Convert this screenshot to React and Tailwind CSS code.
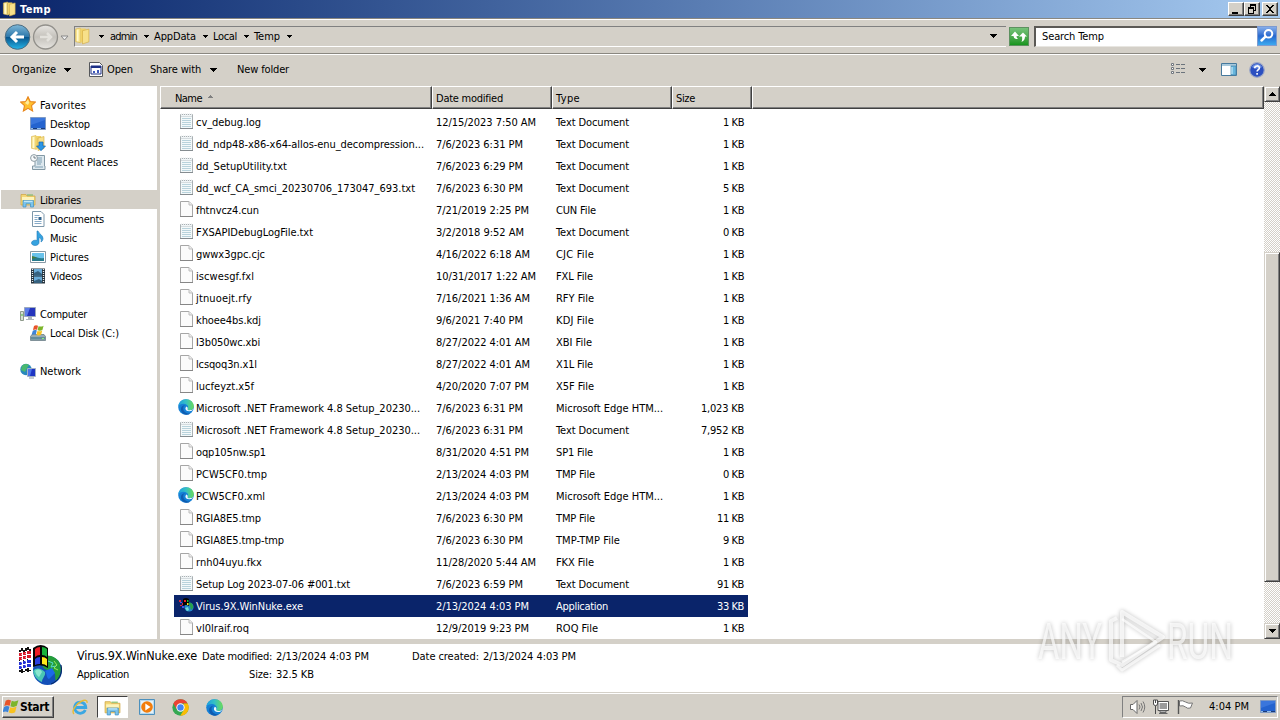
import { useLayoutEffect, useRef, useState } from "react";

const files = [
    ["text", "cv_debug.log", 65, "12/15/2023 7:50 AM", 100, "Text Document", 73, "1 KB"],
    ["text", "dd_ndp48-x86-x64-allos-enu_decompression...", 228, "7/6/2023 6:31 PM", 87, "Text Document", 73, "1 KB"],
    ["text", "dd_SetupUtility.txt", 91, "7/6/2023 6:29 PM", 87, "Text Document", 73, "1 KB"],
    ["text", "dd_wcf_CA_smci_20230706_173047_693.txt", 219, "7/6/2023 6:30 PM", 87, "Text Document", 73, "5 KB"],
    ["blank", "fhtnvcz4.cun", 63, "7/21/2019 2:25 PM", 93, "CUN File", 40, "1 KB"],
    ["text", "FXSAPIDebugLogFile.txt", 117, "3/2/2018 9:52 AM", 88, "Text Document", 73, "0 KB"],
    ["blank", "gwwx3gpc.cjc", 69, "4/16/2022 6:18 AM", 94, "CJC File", 38, "1 KB"],
    ["blank", "iscwesgf.fxl", 58, "10/31/2017 1:22 AM", 100, "FXL File", 37, "1 KB"],
    ["blank", "jtnuoejt.rfy", 56, "7/16/2021 1:36 AM", 94, "RFY File", 38, "1 KB"],
    ["blank", "khoee4bs.kdj", 65, "9/6/2021 7:40 PM", 87, "KDJ File", 38, "1 KB"],
    ["blank", "l3b050wc.xbi", 64, "8/27/2022 4:01 AM", 94, "XBI File", 36, "1 KB"],
    ["blank", "lcsqoq3n.x1l", 61, "8/27/2022 4:01 AM", 94, "X1L File", 37, "1 KB"],
    ["blank", "lucfeyzt.x5f", 58, "4/20/2020 7:07 PM", 93, "X5F File", 38, "1 KB"],
    ["edge", "Microsoft .NET Framework 4.8 Setup_20230...", 224, "7/6/2023 6:31 PM", 87, "Microsoft Edge HTM...", 107, "1,023 KB"],
    ["text", "Microsoft .NET Framework 4.8 Setup_20230...", 224, "7/6/2023 6:31 PM", 87, "Text Document", 73, "7,952 KB"],
    ["blank", "oqp105nw.sp1", 70, "8/31/2020 4:51 PM", 93, "SP1 File", 37, "1 KB"],
    ["blank", "PCW5CF0.tmp", 71, "2/13/2024 4:03 PM", 93, "TMP File", 39, "0 KB"],
    ["edge", "PCW5CF0.xml", 69, "2/13/2024 4:03 PM", 93, "Microsoft Edge HTM...", 107, "1 KB"],
    ["blank", "RGIA8E5.tmp", 65, "7/6/2023 6:30 PM", 87, "TMP File", 39, "11 KB"],
    ["blank", "RGIA8E5.tmp-tmp", 88, "7/6/2023 6:30 PM", 87, "TMP-TMP File", 64, "9 KB"],
    ["blank", "rnh04uyu.fkx", 66, "11/28/2020 5:44 AM", 100, "FKX File", 38, "1 KB"],
    ["text", "Setup Log 2023-07-06 #001.txt", 154, "7/6/2023 6:59 PM", 87, "Text Document", 73, "91 KB"],
    ["exe", "Virus.9X.WinNuke.exe", 107, "2/13/2024 4:03 PM", 93, "Application", 52, "33 KB"],
    ["blank", "vl0lraif.roq", 53, "12/9/2019 9:23 PM", 93, "ROQ File", 42, "1 KB"],
];

const sizeWidths = { "1,023 KB": 43, "7,952 KB": 43, "11 KB": 27, "91 KB": 27, "33 KB": 27 };

const places = [
    { icon: "star", name: "Favorites", w: 46 },
    { icon: "desktop", name: "Desktop", w: 40, child: true },
    { icon: "downloads", name: "Downloads", w: 53, child: true },
    { icon: "recent", name: "Recent Places", w: 68, child: true },
    null,
    { icon: "libraries", name: "Libraries", w: 41, active: true },
    { icon: "documents", name: "Documents", w: 54, child: true },
    { icon: "music", name: "Music", w: 27, child: true },
    { icon: "pictures", name: "Pictures", w: 39, child: true },
    { icon: "videos", name: "Videos", w: 32, child: true },
    null,
    { icon: "computer", name: "Computer", w: 47 },
    { icon: "disk", name: "Local Disk (C:)", w: 69, child: true },
    null,
    { icon: "network", name: "Network", w: 41 },
];

// Spreads the letters so the text takes exactly w pixels
function Text({ w, children, className = "" }) {
    const ref = useRef(null);
    const [spacing, setSpacing] = useState(0);

    useLayoutEffect(() => {
        const el = ref.current;
        el.style.letterSpacing = "0px";
        const natural = el.getBoundingClientRect().width;
        const value = (w - natural) / children.length;
        el.style.letterSpacing = `${value}px`;
        setSpacing(value);
    }, [w, children]);

    return (
        <span
            ref={ref}
            className={`inline-block shrink-0 whitespace-pre ${className}`}
            style={{ letterSpacing: `${spacing}px` }}
        >
            {children}
        </span>
    );
}

function Edge() {
    return (
        <>
            <defs>
                <linearGradient id="wave" x1="0" y1="0" x2="1" y2="0">
                    <stop offset="0" stopColor="#1c9fe0" />
                    <stop offset=".5" stopColor="#34c0c4" />
                    <stop offset="1" stopColor="#6bdc58" />
                </linearGradient>
            </defs>
            <circle cx="8" cy="8" r="7.800" fill="#1580d6" />
            <path d="M.2 7.500C.8 3 4 .2 8 .2c4.600 0 7.800 3.300 7.800 7 0 2.500-1.900 4-4.200 4-1.600 0-2.400-.7-2-1.300.9-1.300.6-3-.6-3.900C6.500 4 2 4.500.2 7.500z" fill="url(#wave)" />
            <path d="M5.200 9c0 3.500 3 6 7.300 5.400C9 17 4.500 15.500 3.200 12 2 8.500 4.500 6.200 7.300 6.300 6 6.700 5.200 7.800 5.200 9z" fill="#0f5cb0" />
            <path d="M8.400 7.400c1.300.6 1.600 1.700 1.200 2.500-.2.700.5 1.300 2 1.300 1.300 0 2.600-.4 3.500-1.200-.5 1.500-2 2.300-3.900 2.200-2.400-.1-3.800-1.300-3.800-2.800 0-.8.400-1.500 1-2z" fill="#eefaff" />
        </>
    );
}

function Folder() {
    return (
        <>
            <path d="M1.500 1.500L6 .5v13.800l-4.500-1z" fill="#f8e48d" stroke="#d9b44c" strokeWidth=".6" />
            <path d="M6 1h5v10l-5 4z" fill="#f1d267" />
            <path d="M8 3l6-1.500v12L8 15.500z" fill="#f7e08a" stroke="#d3ac42" strokeWidth=".6" />
            <path d="M3.500 2v11" stroke="#fff8cf" strokeWidth="1.500" />
        </>
    );
}

function Library() {
    return (
        <>
            <path d="M1 2.500h5l1 1.500h8v9H1z" fill="#f3d777" stroke="#cfa440" strokeWidth=".7" />
            <path d="M2 5h12v3H2z" fill="#fdf3bb" />
            <path d="M7 3h6" stroke="#78b85a" />
            <path d="M3 15V8.500h10.500V15h-3v-3.200H6V15z" fill="#7cc4ec" stroke="#3f8fc4" strokeWidth=".7" />
            <path d="M4 9.300h8.500" stroke="#d3f0fb" />
        </>
    );
}

function WindowsFlag() {
    return (
        <>
            <path d="M2.500 2.500C4.500 1 6 1.500 7.500 2.300L6.300 7.400C4.600 6.500 3 6.600 1.200 7.600z" fill="#e8542a" />
            <path d="M8.200 2.700c2 .9 4.200.7 6.300-.5l-1.500 5.200c-1.900 1.200-4 1.300-6 .4z" fill="#7cb52a" />
            <path d="M1 8.400c1.800-1 3.400-1.100 5-.2l-1.300 5.100c-1.700-.9-3.400-.8-5.200.2z" fill="#3d84d8" />
            <path d="M6.800 8.600c2 .9 4 .7 6-.5L11.400 13.400c-1.900 1.100-3.900 1.200-5.900.3z" fill="#f8c220" />
        </>
    );
}

function Nuke() {
    return (
        <>
            <path d="M1 7h2V5h2v2h2V5h2V4h2v2h2v2h-2V7H9v1H7v1H5V8H3v1H1zM1 27h2v-1h2v2h2v-2h2v-1h2v2h2v1h-2v1H9v-1H7v1H5v1H3v-1H1zM1 17h1v1H1zm4 0h1v1H5zm4-1h1v1H9z" fill="#111" />
            <path d="M1 10h3v3H1zm4-1h3v3H5zm4-1h4v3H9zM1 14h3v3H1zm4-1h3v3H5zm4-1h4v3H9z" fill="#d91b2c" />
            <path d="M1 19h3v3H1zm4-1h3v3H5zm4-1h4v3H9zM1 23h3v3H1zm4-1h3v3H5zm4-1h4v3H9z" fill="#2633d8" />
            <path d="M4 9v18M8 8v18" stroke="#fff" strokeDasharray="1 1" />
            <circle cx="29.500" cy="27.500" r="14.500" fill="#1450b8" />
            <path d="M22 15c6-5 17-2 20 6 2 7 0 13-4 17-2-4 1-6-3-9s-8-1-10-5 1-5-3-9z" fill="#259e3a" />
            <path d="M15 28c3-4 8-3 12 1 1 4-3 6-3 10-5-2-8-6-9-11z" fill="#49c6b4" />
            <path d="M17 28c3-2 5-2 7 1l-3 5c-2-1-3-3-4-6z" fill="#8ae6cf" />
            <path d="M30 18l5 2-2 4 5-1" stroke="#54d8d0" fill="none" />
            <path d="M36 18l3 4-3 3 4 2" stroke="#98e85b" fill="none" />
            <path d="M27 28c2 2 1 7 4 8l6-6-3-5z" fill="#1b6ae8" />
            <path d="M43 22c2 8-2 16-10 19" stroke="#06245c" fill="none" />
            <path d="M15 5q8-6 15 0v20q-7-5-15-1z" fill="#050505" />
            <path d="M17 6q2-2 5-2v8q-3 0-5 2z" fill="#ed1c24" />
            <path d="M24 4q3 0 5 2v8q-2-2-5-2z" fill="#17b33b" />
            <path d="M17 16q2-2 5-2v7q-3 0-5 1z" fill="#2b3fe0" />
            <path d="M24 14q3 0 5 2v7q-2-2-5-2z" fill="#ffe81b" />
        </>
    );
}

function Icon({ name, className = "w-4 h-4" }) {
    const icons = {
        edge: <Edge />,
        folder: <Folder />,
        libraries: <Library />,
        flag: <WindowsFlag />,
        text: (
            <>
                <path d="M2.500 1.500h12v14h-12z" fill="#f4f9fa" stroke="#a9b0b3" />
                <path d="M3 1.500h11" stroke="#e8ecee" strokeWidth="2" strokeDasharray="1 1" />
                <path d="M4 5.500h9M4 7.500h9M4 9.500h9M4 11.500h9M4 13.500h9" stroke="#b9d3dc" />
                <path d="M3 3.500h11" stroke="#d5dcdf" />
                <path d="M2 15.500h13" stroke="#858c90" />
            </>
        ),
        blank: (
            <>
                <path d="M2.500.5h8.500l3.500 3.500v11.500h-12z" fill="#fbfbfb" stroke="#a6a6a6" />
                <path d="M11 .5V4h3.500" fill="#ececec" stroke="#bdbdbd" />
                <path d="M2 15.500h13" stroke="#868686" />
            </>
        ),
        exe: (
            <>
                <path d="M1 3h2v2H1zm3 3h2v2H4zM2 8h2v1H2z" fill="#e02436" />
                <path d="M2 5h2v1H2zm2 4h2v2H4z" fill="#4054ea" />
                <circle cx="11" cy="10" r="4.600" fill="#2389c9" />
                <path d="M9 6c4-2 7 2 6 5l-2 2-1-4z" fill="#28a14b" />
                <path d="M7 11l3-1 1 3-2 1z" fill="#6fdcd2" />
                <path d="M5 2q3-2 6 0v7q-3-2-6 0z" fill="#050505" />
                <path d="M6 3h2v2H6z" fill="#ed1c24" />
                <path d="M9 3h1.500v2H9z" fill="#17b33b" />
                <path d="M9 6h1.500v2H9z" fill="#ffe81b" />
            </>
        ),
        star: (
            <>
                <path d="M8 .8l2.200 4.800 5.200.5-3.900 3.600 1.100 5.300L8 12.300 3.400 15l1.100-5.300L.6 6.100l5.200-.5z" fill="#ffc02e" stroke="#e8871e" strokeWidth="1.100" />
                <path d="M8 3.500l1.200 3.200L8 9 5 7z" fill="#ffeb9a" />
            </>
        ),
        desktop: (
            <>
                <path d="M.5 1.500h15v12H.5z" fill="#2463cf" stroke="#7f9ac4" />
                <path d="M1 2h14v2L1 9z" fill="#3a76dc" />
                <path d="M1 12.500h14" stroke="#1a3a78" />
                <path d="M1 12.500h2m4 0h4" stroke="#8fbce8" />
            </>
        ),
        downloads: (
            <>
                <Folder />
                <path d="M9 7h4v4h2.500L11 15.700 6.500 11H9z" fill="#2b96e6" stroke="#1565ae" strokeWidth=".7" />
            </>
        ),
        recent: (
            <>
                <path d="M5 1.500h9.500V12H15v3.500H2.500V12H5z" fill="#dde8ee" stroke="#8399a5" />
                <path d="M7 4h5M7 6h5M7 8h5M7 10h4M5 13h8" stroke="#7e9fb3" />
                <circle cx="4" cy="4" r="3.400" fill="#f7fafb" stroke="#8c9ba3" />
                <path d="M4 2v2h2" stroke="#51616b" fill="none" strokeWidth=".8" />
            </>
        ),
        documents: (
            <>
                <path d="M2.500.5h8.500l3 3v12H2.500z" fill="#fff" stroke="#7d97aa" />
                <path d="M4.500 4.500h5M4.500 6.500h3M4.500 8.500h3M4.500 10.500h7M4.500 12.500h7" stroke="#86aac8" />
                <path d="M8.500 6h3v3h-3z" fill="#31628c" />
            </>
        ),
        music: <path d="M8 1c1 3 5 4 5 7.500 0 1.500-1 3-2 3.500 1-3-1-4-2-4.500v5c0 1.900-1.800 3-3.900 3C3 15.500 1.500 14.400 1.500 13s1.500-2.800 3.600-2.800c.8 0 1.400.1 1.900.4V1z" fill="#36a3e0" stroke="#1f79b8" strokeWidth=".6" />,
        pictures: (
            <>
                <path d="M.5 2.500h15v11H.5z" fill="#fff" stroke="#8799a5" />
                <path d="M2 4h12v8H2z" fill="#69c2eb" />
                <path d="M2 8c4-1 6 2 12 1v3H2z" fill="#267b8c" />
                <path d="M2 7l5 1.500L2 10z" fill="#477c3e" />
            </>
        ),
        videos: (
            <>
                <path d="M1 .5h14v15H1z" fill="#26343e" />
                <path d="M4 1h8v6.500H4zM4 8.500h8V15H4z" fill="#68abd8" />
                <path d="M4 5l4-2 4 3v1.500H4zM4 13l5-2 3 2v2H4z" fill="#35617f" />
                <path d="M2.500 1v14M13.500 1v14" stroke="#e9eef2" strokeWidth="1.300" strokeDasharray="1 1" />
            </>
        ),
        computer: (
            <>
                <path d="M4.500 1.500h11v9h-11z" fill="#2434bd" stroke="#9ba8bd" />
                <path d="M5 2h5L7 10H5z" fill="#5b7be8" />
                <path d="M8 11h4v2h2v1H6v-1h2z" fill="#adb5bd" />
                <path d="M.5 5.500h3v9h-3z" fill="#d7dfd4" stroke="#8e9a8b" />
                <path d="M2 8v2" stroke="#4bbb3a" />
            </>
        ),
        disk: (
            <>
                <path d="M2 9.500h12l1.500 2v4H.5v-4z" fill="#98abb3" stroke="#60747d" strokeWidth=".7" />
                <path d="M1 12h14v2.500H1z" fill="#628c9c" />
                <path d="M12 13.500h2" stroke="#8bf37b" />
                <g transform="translate(2 -1) scale(.8)">
                    <WindowsFlag />
                </g>
            </>
        ),
        network: (
            <>
                <circle cx="6" cy="6.500" r="5.700" fill="#2887bd" />
                <path d="M2 3c2-3 6-2 7-1L7 5 5 9 1 7z" fill="#49b86f" />
                <path d="M7.500 5.500h8v8h-8z" fill="#1d35c4" stroke="#a3b1c4" />
                <path d="M8 6h4l-2 7H8z" fill="#4a73e8" />
                <path d="M9 15h5" stroke="#8f9ca8" />
            </>
        ),
        open: (
            <>
                <path d="M1.500 1.500h10l3 3v11h-13z" fill="#fff" stroke="#55575b" />
                <path d="M3 5h10v8H3z" fill="#fff" stroke="#1c2f86" />
                <path d="M3 5h10v2H3z" fill="#1c2f86" />
                <path d="M5 10h2v2H5zm4-1h2v3H9z" fill="#3d57bd" />
            </>
        ),
        views: (
            <>
                <path d="M1.500 1.500h2v2h-2zM1.500 5.500h2v2h-2zM1.500 9.500h2v2h-2z" fill="#fff" stroke="#71777f" />
                <path d="M6 2.500h4m1 0h4M6 6.500h4m1 0h4M6 10.500h4m1 0h4" stroke="#6b737c" />
            </>
        ),
        pane: (
            <>
                <path d="M.5 1.500h15v12H.5z" fill="#fff" stroke="#46799d" />
                <path d="M1 2h14v2H1z" fill="#a8c9dc" />
                <path d="M10 4h5v9h-5z" fill="#67b6dd" stroke="#4585a9" strokeWidth=".7" />
                <path d="M11 5v7" stroke="#d9f4ff" />
            </>
        ),
        help: (
            <>
                <circle cx="8" cy="8" r="7.300" fill="#2b4fc0" stroke="#9da8c7" strokeWidth="1.200" />
                <path d="M3 5c2-4 8-4 10 0-3 2-7 2-10 0z" fill="#6f92e3" />
                <path d="M5.700 6.200c0-3 4.700-3 4.700-.2 0 1.700-2.300 1.700-2.300 3.600m0 1.400v1.700" stroke="#fff" strokeWidth="1.600" fill="none" />
            </>
        ),
        ie: (
            <>
                <path d="M13.300 11A5.600 5.600 0 1 1 13.800 8.500H4" stroke="#3aa7e2" strokeWidth="2.800" fill="none" />
                <path d="M2 15C-1 12 4 5 9 2.500c4-2 6.500-1.500 6 1.300" stroke="#e6bb36" strokeWidth="1.400" fill="none" />
            </>
        ),
        player: (
            <>
                <path d="M.5.5h15v15H.5z" fill="#b8d9ee" stroke="#4c90bd" />
                <path d="M2 2h12v12H2z" fill="#e4f2f9" />
                <circle cx="8" cy="8" r="5.800" fill="#f27d0c" />
                <path d="M6.300 4.500L11.500 8l-5.200 3.500z" fill="#fff" />
            </>
        ),
        chrome: (
            <>
                <circle cx="8" cy="8" r="7.700" fill="#34a853" />
                <path d="M1.300 4.200A7.700 7.700 0 0 1 14.700 4.200H8L4.700 10z" fill="#ea4335" />
                <path d="M14.700 4.200A7.700 7.700 0 0 1 7.700 15.700L11.300 10 11 4.200z" fill="#fbbc05" />
                <circle cx="8" cy="8" r="3.900" fill="#fff" />
                <circle cx="8" cy="8" r="3" fill="#4285f4" />
            </>
        ),
        sound: (
            <>
                <path d="M1 5.500h2.500L7.500 1.500v13l-4-4H1z" fill="#fff" stroke="#686868" />
                <path d="M9.500 5.500q2 2.500 0 5M11.500 4q3 4 0 8M13.500 2.500q3.500 5.500 0 11" stroke="#777" fill="none" />
            </>
        ),
        lan: (
            <>
                <path d="M5 2.500h10.500v9H5z" fill="#fff" stroke="#555" />
                <path d="M6.500 4h7.500v6H6.500z" fill="#9b9b9b" />
                <path d="M7 12h6v1.500H7zM6 14.500h8.500" stroke="#666" fill="#fff" />
                <path d="M.5 1v4q0 1.500 2 1.500T4.500 5V1z" fill="#fff" stroke="#4b4b4b" />
                <path d="M2.500 1v3M2.500 7v8" stroke="#4b4b4b" />
            </>
        ),
        action: (
            <>
                <path d="M2.500 2q3-1 6 1t7 1l-2 5q-3 1-5-1t-6-1z" fill="#fff" stroke="#777" />
                <path d="M1.500 1v14" stroke="#555" strokeWidth="1.400" />
            </>
        ),
    };
    return (
        <svg viewBox="0 0 16 16" className={`shrink-0 ${className}`}>
            {icons[name]}
        </svg>
    );
}

function Arrow({ className = "" }) {
    return (
        <svg viewBox="0 0 7 4" className={`w-[7px] h-1 shrink-0 ${className}`} shapeRendering="crispEdges">
            <path d="M0 0h7v1H6v1H5v1H4v1H3V3H2V2H1V1H0z" fill="currentColor" />
        </svg>
    );
}

function SmallArrow({ className = "" }) {
    return (
        <svg viewBox="0 0 5 3" className={`w-[5px] h-[3px] shrink-0 ${className}`} shapeRendering="crispEdges">
            <path d="M0 0h5v1H4v1H3v1H2V2H1V1H0z" fill="currentColor" />
        </svg>
    );
}

function CaptionButton({ children, className = "" }) {
    return (
        <div className={`w-4 h-[14px] bg-[#d4d0c8] border border-t-white border-l-white border-r-[#404040] border-b-[#404040] shadow-[inset_-1px_-1px_0_#808080] ${className}`}>
            <svg viewBox="0 0 14 12" className="w-[14px] h-3" shapeRendering="crispEdges">
                {children}
            </svg>
        </div>
    );
}

function TitleBar() {
    return (
        <div className="h-[18px] flex items-center bg-linear-to-r from-[#0a246a] to-[#a6caf0] text-white pl-[2px] pr-[2px]">
            <Icon name="folder" className="w-[15px] h-4" />
            <Text w={31} className="ml-[3px] pt-[2px] font-bold">Temp</Text>
            <div className="ml-auto flex">
                <CaptionButton>
                    <path d="M3 9h6v2H3z" />
                </CaptionButton>
                <CaptionButton>
                    <path d="M5 1h6v2H5zM5 3h1v1H5zM10 3h1v5h-1zM9 7h1v1H9zM3 4h6v2H3zM3 6h1v4H3zM8 6h1v4H8zM3 10h6v1H3z" />
                </CaptionButton>
                <CaptionButton className="ml-[2px]">
                    <path d="M3 2h2v1h1v1h2V3h1V2h2v1h-1v1H9v1H8v2h1v1h1v1h1v1H9V9H8V8H6v1H5v1H3V9h1V8h1V7h1V5H5V4H4V3H3z" />
                </CaptionButton>
            </div>
        </div>
    );
}

function AddressBar() {
    const crumbs = [["admin", 27, "ml-[6px]"], ["AppData", 42, "ml-[5px]"], ["Local", 24, "ml-[5px]"], ["Temp", 26, "ml-[5px]"]];
    return (
        <div className="h-9 flex items-center border-t border-b border-[#8a8780] shadow-[inset_0_1px_0_#fff,0_1px_0_#fff] pl-1 pr-[3px]">
            <svg viewBox="0 0 66 28" className="w-[66px] h-7 shrink-0">
                <defs>
                    <linearGradient id="back" x1="0" y1="0" x2="0" y2="1">
                        <stop offset="0" stopColor="#7fb8d8" />
                        <stop offset=".48" stopColor="#2d78ab" />
                        <stop offset=".52" stopColor="#08578f" />
                        <stop offset="1" stopColor="#25b5e8" />
                    </linearGradient>
                    <linearGradient id="next" x1="0" y1="0" x2="0" y2="1">
                        <stop offset="0" stopColor="#e8e6e2" />
                        <stop offset=".5" stopColor="#c4c1bb" />
                        <stop offset="1" stopColor="#e7e5e1" />
                    </linearGradient>
                </defs>
                <circle cx="13.500" cy="15" r="12.300" fill="url(#back)" stroke="#4c6c80" />
                <path d="M20 15H8m5-5l-5 5 5 5" stroke="#fff" strokeWidth="3" fill="none" />
                <circle cx="41.500" cy="15" r="12" fill="url(#next)" stroke="#92908b" strokeWidth="1.300" />
                <path d="M36 15h11m-4-4l4 4-4 4" stroke="#e3e1dc" strokeWidth="2.500" fill="none" />
                <path d="M57 14h7l-3.500 4z" fill="#eee" stroke="#888" />
            </svg>
            <div className="flex-1 h-[21px] ml-1 flex items-center border-t border-l border-[#808080] border-b border-b-white">
                <Icon name="folder" className="w-[17px] h-[18px] -ml-px" />
                <SmallArrow className="ml-[8px]" />
                {crumbs.map(([name, w, gap]) => (
                    <div key={name} className={`flex items-center ${gap}`}>
                        <Text w={w} className="pt-px">{name}</Text>
                        <SmallArrow className="ml-[7px]" />
                    </div>
                ))}
                <Arrow className="ml-auto mr-[9px]" />
            </div>
            <div className="w-5 h-[19px] ml-[3px] border border-[#5d9160] bg-linear-to-b from-[#75c279] to-[#14951c]">
                <svg viewBox="0 0 18 17" className="w-[18px] h-[17px]">
                    <path d="M1 8L5 3.500 9 8H6.500q0 2 1.500 3H6Q3.500 10.500 3.500 8zM9 8.500L13 4.500l4 4h-2q0 4-3.500 5.500 1-2 .5-5.500z" fill="#fff" />
                </svg>
            </div>
            <div className="w-[223px] h-[21px] ml-[5px] pl-[6px] flex items-center bg-white border-t-2 border-l-2 border-[#5b5955] border-b border-b-[#e8e6e1]">
                <Text w={62}>Search Temp</Text>
            </div>
            <div className="w-5 h-5 border border-[#7d9bd0] bg-linear-to-b from-[#86aeea] via-[#2868cf] to-[#3da9ef]">
                <svg viewBox="0 0 18 18" className="w-[18px] h-[18px]">
                    <circle cx="10.500" cy="6.800" r="3.800" stroke="#fff" strokeWidth="2" fill="none" />
                    <path d="M7.500 9.700L3.500 13.500" stroke="#fff" strokeWidth="2.500" strokeLinecap="round" />
                </svg>
            </div>
        </div>
    );
}

function Toolbar() {
    return (
        <div className="h-8 flex items-center pl-3 pr-[15px]">
            <Text w={44}>Organize</Text>
            <Arrow className="ml-[8px]" />
            <Icon name="open" className="w-4 h-4 ml-[17px] -mt-[2px]" />
            <Text w={26} className="ml-[3px]">Open</Text>
            <Text w={51} className="ml-[17px]">Share with</Text>
            <Arrow className="ml-[9px]" />
            <Text w={52} className="ml-[20px]">New folder</Text>
            <Icon name="views" className="w-4 h-4 ml-auto" />
            <Arrow className="ml-[13px]" />
            <Icon name="pane" className="w-4 h-4 ml-[15px]" />
            <Icon name="help" className="w-4 h-4 ml-[12px]" />
        </div>
    );
}

function Sidebar() {
    return (
        <div className="w-[157px] shrink-0 bg-white pt-[9px] pl-px">
            {places.map((place, i) =>
                place ? (
                    <div
                        key={place.name}
                        className={`h-[19px] flex items-center ${place.child ? "pl-[29px]" : "pl-[19px]"} ${place.active ? "bg-[#d4d0c8]" : ""}`}
                    >
                        <Icon name={place.icon} className={place.icon === "star" ? "w-4 h-4 -mt-px" : "w-4 h-4 mt-px"} />
                        <Text w={place.w} className="ml-1 pt-[2px]">{place.name}</Text>
                    </div>
                ) : (
                    <div key={i} className="h-[19px]"></div>
                )
            )}
        </div>
    );
}

function HeaderCell({ children, className }) {
    return (
        <div className={`h-full flex items-center bg-[#d4d0c8] border-t border-l border-white border-r border-r-[#404040] border-b border-b-[#404040] shadow-[inset_-1px_-1px_0_#808080] ${className}`}>
            {children}
        </div>
    );
}

function FileList() {
    return (
        <div className="flex-1 bg-white overflow-hidden">
            <div className="h-[23px] flex">
                <HeaderCell className="w-[272px] pl-[14px]">
                    <Text w={27} className="pt-[2px]">Name</Text>
                    <SmallArrow className="ml-[6px] rotate-180 text-[#808080] -mt-[2px]" />
                </HeaderCell>
                <HeaderCell className="w-[120px] pl-[3px]">
                    <Text w={67} className="pt-[2px]">Date modified</Text>
                </HeaderCell>
                <HeaderCell className="w-[120px] pl-[3px]">
                    <Text w={24} className="pt-[2px]">Type</Text>
                </HeaderCell>
                <HeaderCell className="w-[80px] pl-[3px]">
                    <Text w={19} className="pt-[2px]">Size</Text>
                </HeaderCell>
                <HeaderCell className="flex-1"></HeaderCell>
            </div>
            <div className="pt-[2px] pl-[14px]">
                {files.map(([icon, name, nameW, date, dateW, type, typeW, size], i) => (
                    <div
                        key={i}
                        className={`h-[22px] w-[574px] flex items-center pl-1 ${icon === "exe" ? "bg-[#0a246a] text-white" : ""}`}
                    >
                        <Icon name={icon} className="w-4 h-4 -mt-[2px]" />
                        <div className="w-[240px] pl-[2px] pt-[2px] flex">
                            <Text w={nameW}>{name}</Text>
                        </div>
                        <div className="w-[120px] pl-[2px] pt-[2px] flex">
                            <Text w={dateW}>{date}</Text>
                        </div>
                        <div className="w-[115px] pl-[2px] pt-[2px] flex">
                            <Text w={typeW}>{type}</Text>
                        </div>
                        <div className="flex-1 flex justify-end pt-[2px] pr-[4px]">
                            <Text w={sizeWidths[size] || 21}>{size}</Text>
                        </div>
                    </div>
                ))}
            </div>
        </div>
    );
}

function ScrollButton({ down }) {
    return (
        <div className="h-4 flex items-center justify-center bg-[#d4d0c8] border border-t-[#d4d0c8] border-l-[#d4d0c8] border-r-[#404040] border-b-[#404040] shadow-[inset_1px_1px_0_#fff,inset_-1px_-1px_0_#808080]">
            <Arrow className={down ? "" : "rotate-180"} />
        </div>
    );
}

function Scrollbar() {
    return (
        <div className="w-4 shrink-0 flex flex-col bg-[repeating-conic-gradient(#d4d0c8_0_25%,#fff_0_50%)] bg-size-[2px_2px]">
            <ScrollButton />
            <div className="h-[330px] mt-[150px] bg-[#d4d0c8] border border-t-[#d4d0c8] border-l-[#d4d0c8] border-r-[#404040] border-b-[#404040] shadow-[inset_1px_1px_0_#fff,inset_-1px_-1px_0_#808080]"></div>
            <div className="mt-auto">
                <ScrollButton down />
            </div>
        </div>
    );
}

function Details() {
    return (
        <div className="h-12 bg-white flex pl-[18px]">
            <svg viewBox="0 0 46 44" className="w-[46px] h-11 shrink-0 -mt-px">
                <Nuke />
            </svg>
            <div className="ml-[13px] w-[125px] pt-[3px]">
                <Text w={120} className="text-[12.5px] h-[21px] leading-[18px]">Virus.9X.WinNuke.exe</Text>
                <Text w={52} className="block">Application</Text>
            </div>
            <div className="w-[70px] pt-[6px] flex flex-col items-end gap-1">
                <Text w={70}>Date modified:</Text>
                <Text w={23}>Size:</Text>
            </div>
            <div className="w-[136px] pl-[4px] pt-[6px] flex flex-col items-start gap-1">
                <Text w={93}>2/13/2024 4:03 PM</Text>
                <Text w={38}>32.5 KB</Text>
            </div>
            <div className="pt-[6px] ml-[4px] flex gap-1">
                <Text w={67}>Date created:</Text>
                <Text w={93}>2/13/2024 4:03 PM</Text>
            </div>
        </div>
    );
}

function Taskbar() {
    return (
        <div className="h-7 flex items-center border-t border-[#d4d0c8] shadow-[inset_0_1px_0_#fff] pl-[2px] pr-[2px] pt-px">
            <div className="w-[52px] h-[22px] flex items-center border border-t-white border-l-white border-r-[#404040] border-b-[#404040] shadow-[inset_-1px_-1px_0_#808080]">
                <Icon name="flag" className="w-[17px] h-[17px] -mt-px" />
                <Text w={29} className="font-bold text-[12px]">Start</Text>
            </div>
            <Icon name="ie" className="w-4 h-4 ml-[18px]" />
            <div className="w-[31px] h-[22px] ml-[9px] flex items-center justify-center bg-white border border-t-[#404040] border-l-[#404040] border-r-white border-b-white">
                <Icon name="libraries" className="w-[17px] h-[17px]" />
            </div>
            <Icon name="player" className="w-4 h-4 ml-[11px]" />
            <Icon name="chrome" className="w-[17px] h-[17px] ml-[17px]" />
            <Icon name="edge" className="w-[17px] h-[17px] ml-[17px]" />
            <div className="w-[156px] h-[22px] ml-auto flex items-center pl-[6px] border border-t-[#808080] border-l-[#808080] border-r-white border-b-white">
                <Icon name="sound" className="w-[17px] h-4" />
                <Icon name="lan" className="w-4 h-4 ml-[7px]" />
                <Icon name="action" className="w-4 h-4 ml-[8px]" />
                <Text w={40} className="ml-[16px]">4:04 PM</Text>
                <Icon name="desktop" className="w-4 h-4 ml-[11px]" />
            </div>
        </div>
    );
}

function Watermark() {
    return (
        <svg viewBox="0 0 230 80" className="absolute left-[1030px] top-[603px] w-[230px] h-[80px] overflow-visible drop-shadow-[0_0_2px_rgba(0,0,0,0.35)]">
            <g fill="#fff" fillOpacity=".7" fontFamily="Liberation Sans Narrow, Roboto, sans-serif" fontSize="50">
                <text x="8" y="56" textLength="64" lengthAdjust="spacingAndGlyphs">ANY</text>
                <text x="137" y="56" textLength="66" lengthAdjust="spacingAndGlyphs">RUN</text>
            </g>
            <g fill="none" stroke="#fff" strokeOpacity=".7" strokeLinejoin="round">
                <path d="M92 54V9l41 25-41 28-11-5V18l6-3" strokeWidth="4" />
                <path d="M92 16l34 23-34 20" strokeWidth="2.500" />
                <path d="M87 62l5 5 38-25" strokeWidth="3" />
            </g>
        </svg>
    );
}

function App() {
    return (
        <div className="relative w-[1280px] h-[720px] overflow-hidden flex flex-col bg-[#d4d0c8] text-black text-[11px] leading-[14px] font-['DejaVu_Sans_Condensed','DejaVu_Sans',sans-serif]">
            <TitleBar />
            <AddressBar />
            <Toolbar />
            <div className="h-[553px] flex">
                <Sidebar />
                <div className="w-[3px] shrink-0"></div>
                <FileList />
                <Scrollbar />
            </div>
            <div className="h-[5px]"></div>
            <Details />
            <Taskbar />
            <Watermark />
        </div>
    );
}

export default App;
